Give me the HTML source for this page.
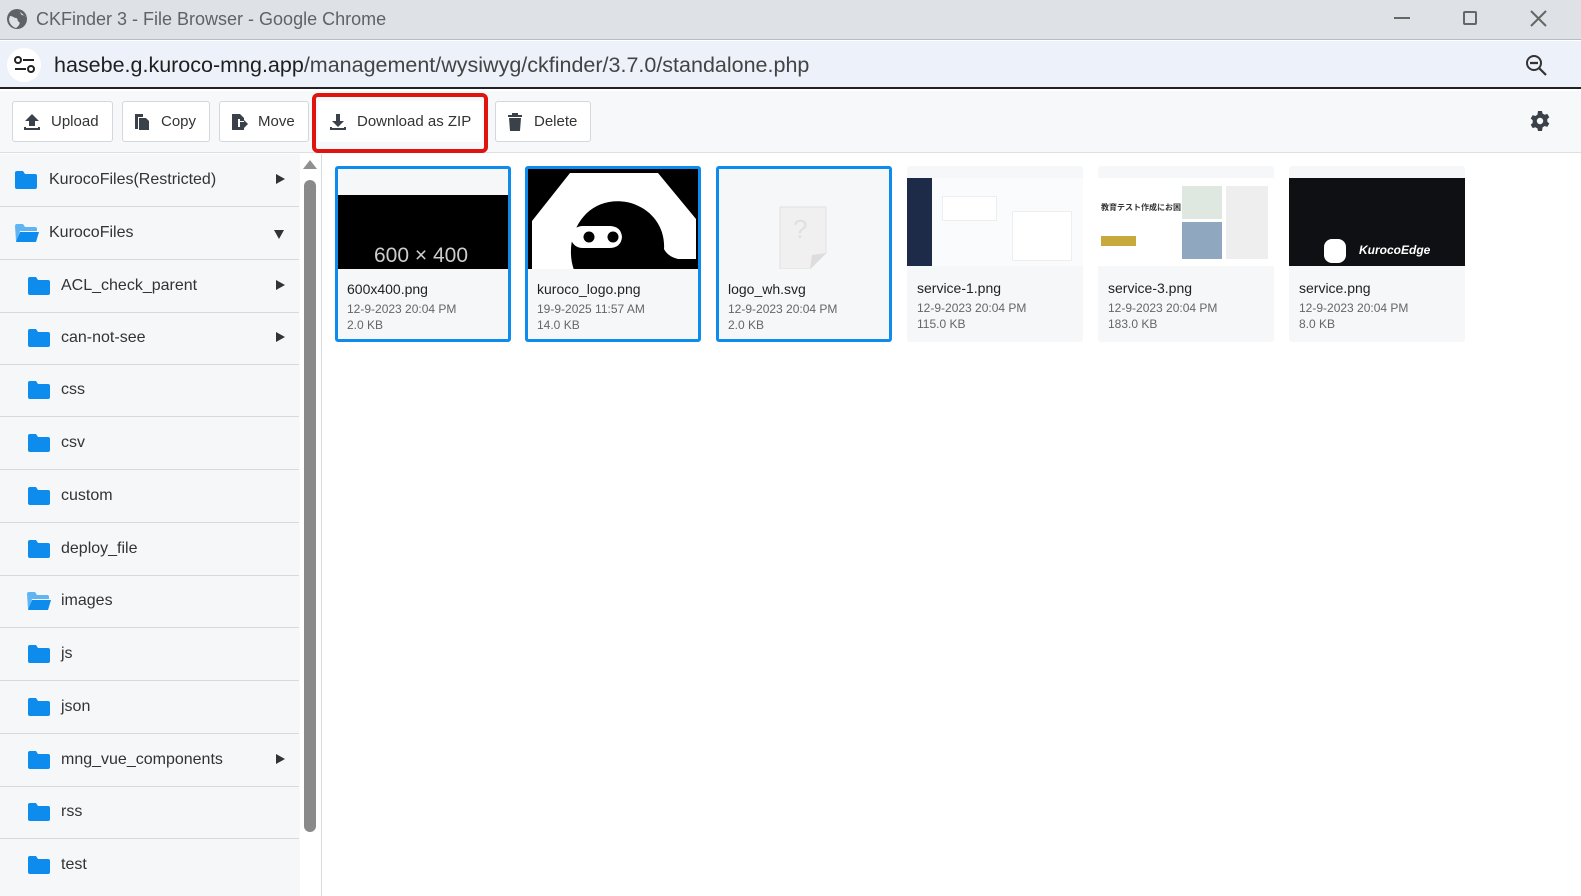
<!DOCTYPE html>
<html><head><meta charset="utf-8"><style>
*{box-sizing:border-box;margin:0;padding:0}
body{width:1581px;height:896px;overflow:hidden;font-family:"Liberation Sans",Arial,sans-serif;background:#fff;position:relative;color:#333}
.abs{position:absolute}
#title{left:0;top:0;width:1581px;height:40px;background:#dee1e6;border-bottom:1px solid #b8bbbf}
#title .t{left:36px;top:9px;font-size:18px;color:#5f6368;font-family:"Liberation Sans",sans-serif}
#addr{left:0;top:41px;width:1581px;height:48px;background:#edf1f9;border-bottom:2px solid #222}
#addr .u{left:54px;top:12px;font-size:21.5px;color:#1f1f1f;font-family:"Liberation Sans",sans-serif}
#addr .u span{color:#444}
#tb{left:0;top:91px;width:1581px;height:62px;background:#f7f8fa;border-bottom:1px solid #dcdfe3}
.btn{position:absolute;top:10px;height:41px;border:1px solid #d4d7db;border-radius:3px;background:#fff;font-size:15px;color:#333;display:flex;align-items:center;padding-left:10px}
.btn svg{margin-right:10px}
#side{left:0;top:154px;width:300px;height:742px;background:#f6f7f9}
.row{position:absolute;left:0;width:299px;height:53px;border-bottom:1px solid #d7dadd;font-size:16px;color:#333}
.row .n{position:absolute;top:17px}
.row .f{position:absolute;top:17px}
.row .ar{position:absolute;right:14px;top:20px;width:0;height:0;border-left:9px solid #333;border-top:5px solid transparent;border-bottom:5px solid transparent}
#sb{left:300px;top:154px;width:22px;height:742px;background:#fff;border-right:1px solid #d7dadd}
.tile{position:absolute;top:166px;width:176px;height:176px;background:#f6f7f9;border-radius:3px}
.tile.sel{border:3px solid #0d8ced}
.tile .im{position:absolute;left:0;top:0;width:100%;height:100px;overflow:hidden}
.tile .nm{position:absolute;left:10px;top:114px;font-size:14px;color:#222}
.tile.sel .nm{left:9px;top:112px}
.tile .d{position:absolute;left:10px;top:134px;font-size:12px;color:#666;line-height:16px}
.tile.sel .d{left:9px;top:132px}
</style></head><body>
<div id="title" class="abs">
<svg class="abs" style="left:6px;top:8px" width="22" height="22" viewBox="0 0 22 22"><circle cx="11" cy="11" r="10" fill="#5f6368"/><path d="M4 8c3 0 4 2 6 2s1 3 3 4-1 5-3 6C6 19 3 15 3 11z M13 3c2 1 1 3 3 4s3 0 4 2" fill="#dee1e6"/></svg>
<div class="abs t">CKFinder 3 - File Browser - Google Chrome</div>
<div class="abs" style="left:1394px;top:17px;width:16px;height:2px;background:#666"></div>
<div class="abs" style="left:1463px;top:11px;width:14px;height:14px;border:2px solid #666;border-radius:2px"></div>
<svg class="abs" style="left:1530px;top:10px" width="17" height="17"><path d="M1 1L16 16M16 1L1 16" stroke="#666" stroke-width="2"/></svg>
</div>
<div id="addr" class="abs">
<div class="abs" style="left:7px;top:7px;width:34px;height:34px;border-radius:17px;background:#fff"></div>
<svg class="abs" style="left:14px;top:15px" width="22" height="18"><circle cx="4" cy="4" r="3" fill="none" stroke="#222" stroke-width="2"/><path d="M9 4h11M1 13h11" stroke="#222" stroke-width="2"/><circle cx="17" cy="13" r="3" fill="none" stroke="#222" stroke-width="2"/></svg>
<div class="abs u">hasebe.g.kuroco-mng.app<span>/management/wysiwyg/ckfinder/3.7.0/standalone.php</span></div>
<svg class="abs" style="left:1525px;top:13px" width="24" height="24"><circle cx="9" cy="9" r="7" fill="none" stroke="#333" stroke-width="2"/><path d="M5 9h8M14 14l7 7" stroke="#333" stroke-width="2.2"/></svg>
</div>
<div id="tb" class="abs">
<div class="btn" style="left:12px;width:101px"><svg width="18" height="18"><path d="M9 1L2 8h4v5h6V8h4z M1 14v3h16v-3h-2v1H3v-1z" fill="#3a4149"/></svg>Upload</div>
<div class="btn" style="left:122px;width:88px"><svg width="18" height="18"><path d="M2 1h8v3H5v12H2z M6 5h7l3 3v9H6z" fill="#3a4149"/></svg>Copy</div>
<div class="btn" style="left:219px;width:90px"><svg width="18" height="18"><path d="M2 1h8l4 4v3h-4v-2H8v8h2v-2h4v5H2z M10 9h4V7l4 4-4 4v-2h-4z" fill="#3a4149"/></svg>Move</div>
<div class="abs" style="left:312px;top:2px;width:176px;height:60px;border:4px solid #e0130e;border-radius:6px"></div>
<div class="btn" style="left:318px;width:164px;border-color:#fff"><svg width="18" height="18"><path d="M7 1h4v7h4l-6 6-6-6h4z M1 14v3h16v-3h-2v1H3v-1z" fill="#3a4149"/></svg>Download as ZIP</div>
<div class="btn" style="left:495px;width:96px"><svg width="18" height="18"><path d="M2 2h14v2H2z M6 0h6v2H6z M3 5h12l-1 13H4z" fill="#3a4149"/></svg>Delete</div>
<svg class="abs" style="left:1530px;top:20px" width="20" height="20" viewBox="0 0 20 20"><path d="M8 0h4l.6 2.6 2.2 1.2 2.5-.9 2 3.4-2 1.8v2.6l2 1.8-2 3.4-2.5-.9-2.2 1.2L12 20H8l-.6-2.6-2.2-1.2-2.5.9-2-3.4 2-1.8V9.3L.7 7.5l2-3.4 2.5.9 2.2-1.2z" fill="#3a4149"/><circle cx="10" cy="10" r="3.2" fill="#f7f8fa"/></svg>
</div>
<div id="side" class="abs">
<div class="row" style="top:0"><svg class="f" style="left:15px" width="22" height="18"><path d="M0 2q0-2 2-2h6l2 3h10q2 0 2 2v11q0 2-2 2H2q-2 0-2-2z" fill="#0d8ced"/></svg><span class="n" style="left:49px">KurocoFiles(Restricted)</span><i class="ar"></i></div>
<div class="row" style="top:53px"><svg class="f" style="left:15px" width="24" height="18"><path d="M0 2q0-2 2-2h6l2 3h10q2 0 2 2v2H5L2 17H1z" fill="#5fb4f3"/><path d="M5 8h19l-3 10H1z" fill="#0d8ced"/></svg><span class="n" style="left:49px">KurocoFiles</span><i class="ar" style="border-left:5px solid transparent;border-right:5px solid transparent;border-top:9px solid #333;border-bottom:0;top:23px;right:15px"></i></div>
<div class="row" style="top:106px"><svg class="f" style="left:28px" width="22" height="18"><path d="M0 2q0-2 2-2h6l2 3h10q2 0 2 2v11q0 2-2 2H2q-2 0-2-2z" fill="#0d8ced"/></svg><span class="n" style="left:61px">ACL_check_parent</span><i class="ar"></i></div>
<div class="row" style="top:158px"><svg class="f" style="left:28px" width="22" height="18"><path d="M0 2q0-2 2-2h6l2 3h10q2 0 2 2v11q0 2-2 2H2q-2 0-2-2z" fill="#0d8ced"/></svg><span class="n" style="left:61px">can-not-see</span><i class="ar"></i></div>
<div class="row" style="top:210px"><svg class="f" style="left:28px" width="22" height="18"><path d="M0 2q0-2 2-2h6l2 3h10q2 0 2 2v11q0 2-2 2H2q-2 0-2-2z" fill="#0d8ced"/></svg><span class="n" style="left:61px">css</span></div>
<div class="row" style="top:263px"><svg class="f" style="left:28px" width="22" height="18"><path d="M0 2q0-2 2-2h6l2 3h10q2 0 2 2v11q0 2-2 2H2q-2 0-2-2z" fill="#0d8ced"/></svg><span class="n" style="left:61px">csv</span></div>
<div class="row" style="top:316px"><svg class="f" style="left:28px" width="22" height="18"><path d="M0 2q0-2 2-2h6l2 3h10q2 0 2 2v11q0 2-2 2H2q-2 0-2-2z" fill="#0d8ced"/></svg><span class="n" style="left:61px">custom</span></div>
<div class="row" style="top:369px"><svg class="f" style="left:28px" width="22" height="18"><path d="M0 2q0-2 2-2h6l2 3h10q2 0 2 2v11q0 2-2 2H2q-2 0-2-2z" fill="#0d8ced"/></svg><span class="n" style="left:61px">deploy_file</span></div>
<div class="row" style="top:421px"><svg class="f" style="left:27px" width="24" height="18"><path d="M0 2q0-2 2-2h6l2 3h10q2 0 2 2v2H5L2 17H1z" fill="#5fb4f3"/><path d="M5 8h19l-3 10H1z" fill="#0d8ced"/></svg><span class="n" style="left:61px">images</span></div>
<div class="row" style="top:474px"><svg class="f" style="left:28px" width="22" height="18"><path d="M0 2q0-2 2-2h6l2 3h10q2 0 2 2v11q0 2-2 2H2q-2 0-2-2z" fill="#0d8ced"/></svg><span class="n" style="left:61px">js</span></div>
<div class="row" style="top:527px"><svg class="f" style="left:28px" width="22" height="18"><path d="M0 2q0-2 2-2h6l2 3h10q2 0 2 2v11q0 2-2 2H2q-2 0-2-2z" fill="#0d8ced"/></svg><span class="n" style="left:61px">json</span></div>
<div class="row" style="top:580px"><svg class="f" style="left:28px" width="22" height="18"><path d="M0 2q0-2 2-2h6l2 3h10q2 0 2 2v11q0 2-2 2H2q-2 0-2-2z" fill="#0d8ced"/></svg><span class="n" style="left:61px">mng_vue_components</span><i class="ar"></i></div>
<div class="row" style="top:632px"><svg class="f" style="left:28px" width="22" height="18"><path d="M0 2q0-2 2-2h6l2 3h10q2 0 2 2v11q0 2-2 2H2q-2 0-2-2z" fill="#0d8ced"/></svg><span class="n" style="left:61px">rss</span></div>
<div class="row" style="top:685px;border:0"><svg class="f" style="left:28px" width="22" height="18"><path d="M0 2q0-2 2-2h6l2 3h10q2 0 2 2v11q0 2-2 2H2q-2 0-2-2z" fill="#0d8ced"/></svg><span class="n" style="left:61px">test</span></div>
</div>
<div id="sb" class="abs">
<div class="abs" style="left:3px;top:6px;width:0;height:0;border-left:7px solid transparent;border-right:7px solid transparent;border-bottom:9px solid #909090"></div>
<div class="abs" style="left:4px;top:26px;width:12px;height:652px;border-radius:6px;background:#8a8a8a"></div>
</div>
<div class="tile sel" style="left:335px"><div class="im"><div class="abs" style="left:0;top:26px;width:100%;height:75px;background:#000"></div><div class="abs" style="left:36px;top:75px;color:#ccc;font-size:21px">600 × 400</div></div><div class="nm">600x400.png</div><div class="d">12-9-2023 20:04 PM<br>2.0 KB</div></div>
<div class="tile sel" style="left:525px"><div class="im" style="background:#000"><svg width="170" height="101" viewBox="0 0 170 101"><path d="M4 101V52L42 4h88l38 46v40h-18c-8-2-12-6-14-10 2-30-25-52-55-47-30 5-45 40-35 68z" fill="#fff"/><path d="M42 68q3-11 13-11h26q12 0 13 11-1 11-13 11H55q-10 0-13-11z" fill="#fff"/><circle cx="61" cy="68" r="5.5" fill="#000"/><circle cx="85" cy="68" r="5.5" fill="#000"/></svg></div><div class="nm">kuroco_logo.png</div><div class="d">19-9-2025 11:57 AM<br>14.0 KB</div></div>
<div class="tile sel" style="left:716px"><div class="im"><svg class="abs" style="left:60px;top:37px" width="48" height="64"><path d="M1 1h46v46L31 63H1z" fill="#f0f0f0" stroke="#e2e2e2"/><path d="M31 63l2-14 14-2z" fill="#ddd"/><text x="14" y="32" font-size="26" fill="#e0e0e0" font-family="Liberation Sans">?</text></svg></div><div class="nm">logo_wh.svg</div><div class="d">12-9-2023 20:04 PM<br>2.0 KB</div></div>
<div class="tile" style="left:907px"><div class="im"><div class="abs" style="left:0;top:12px;width:100%;height:88px;background:#fafbfd"></div><div class="abs" style="left:0;top:12px;width:25px;height:88px;background:#1e2b48"></div><div class="abs" style="left:35px;top:30px;width:55px;height:25px;background:#fff;border:1px solid #eee"></div><div class="abs" style="left:105px;top:45px;width:60px;height:50px;background:#fff;border:1px solid #eee"></div></div><div class="nm">service-1.png</div><div class="d">12-9-2023 20:04 PM<br>115.0 KB</div></div>
<div class="tile" style="left:1098px"><div class="im"><div class="abs" style="left:0;top:12px;width:100%;height:88px;background:#fff"></div><div class="abs" style="left:3px;top:36px;font-size:8px;font-weight:bold;color:#333;font-family:'Liberation Sans','Noto Sans CJK JP',sans-serif">教育テスト作成にお困りなら</div><div class="abs" style="left:3px;top:70px;width:35px;height:10px;background:#c8a93e"></div><div class="abs" style="left:84px;top:20px;width:40px;height:33px;background:#dfe8e0"></div><div class="abs" style="left:84px;top:56px;width:40px;height:37px;background:#8fa7bf"></div><div class="abs" style="left:128px;top:20px;width:42px;height:73px;background:#eee"></div></div><div class="nm">service-3.png</div><div class="d">12-9-2023 20:04 PM<br>183.0 KB</div></div>
<div class="tile" style="left:1289px"><div class="im"><div class="abs" style="left:0;top:12px;width:100%;height:88px;background:#0f1013"></div><div class="abs" style="left:35px;top:73px;width:22px;height:24px;border-radius:8px;background:#fff"></div><div class="abs" style="left:70px;top:77px;color:#fff;font-size:12px;font-weight:bold;font-style:italic">KurocoEdge</div></div><div class="nm">service.png</div><div class="d">12-9-2023 20:04 PM<br>8.0 KB</div></div>
</body></html>
